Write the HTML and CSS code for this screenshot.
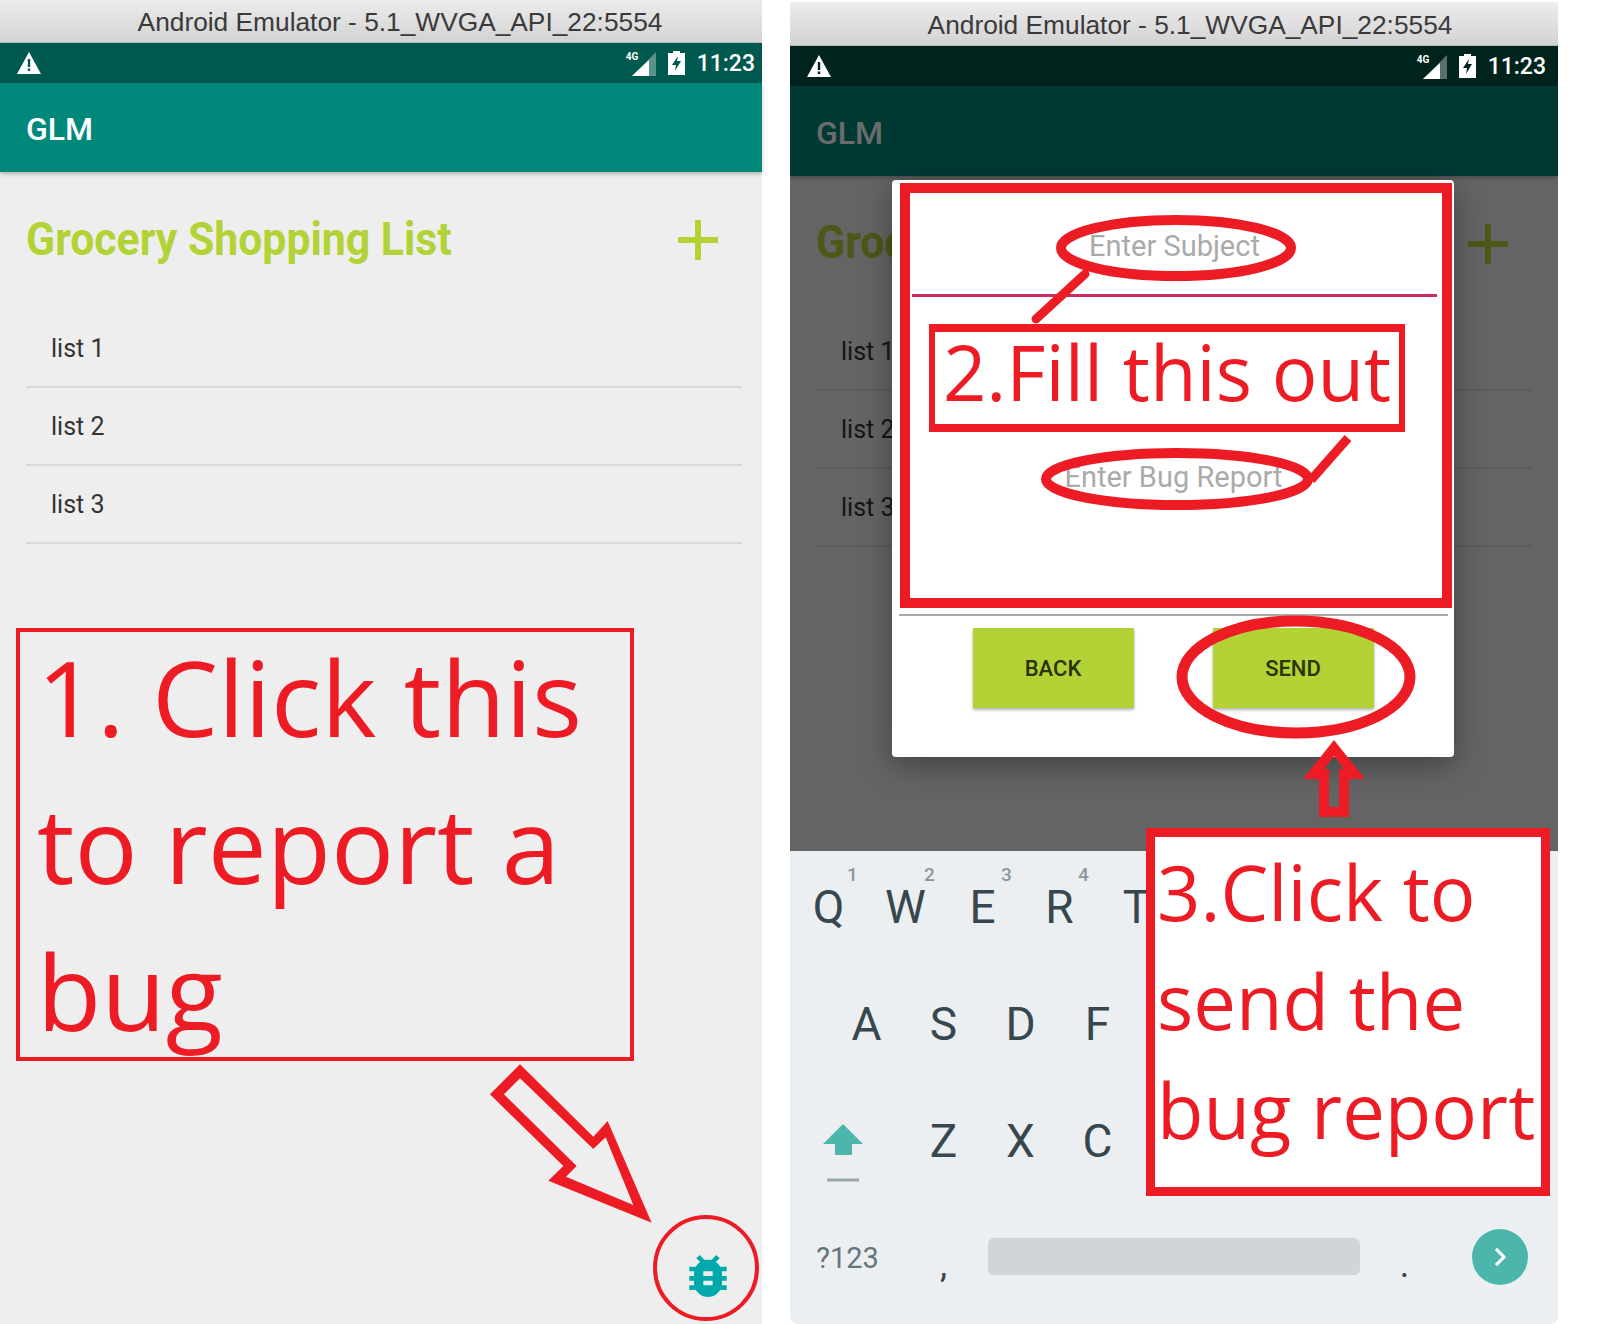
FILE: index.html
```html
<!DOCTYPE html>
<html lang="en">
<head>
    <meta charset="UTF-8">
    <title>Report a bug</title>
    <link rel="stylesheet" href="styles.css">
</head>
<body>
    <div class="shot">
        <!-- left emulator -->
        <div class="phone phone-left">
            <div class="titlebar">Android Emulator - 5.1_WVGA_API_22:5554</div>
            <div class="statusbar">
                <svg class="warn" viewBox="0 0 24 22"><path d="M12 0 24 22H0z" fill="#fff"/><path d="M10.8 7h2.4v8h-2.4zM10.8 16.500h2.400v2.500h-2.400z" fill="#00594f"/></svg>
                <span class="status-right">
                    <span class="net">4G</span>
                    <svg class="signal" viewBox="0 0 24 24"><path d="M24 0v24H0z" fill="#fff" opacity=".35"/><path d="M17 8v16H0z" fill="#fff"/></svg>
                    <svg class="battery" viewBox="0 0 17 24"><path d="M5 0h7v2h5v22H0V2h5z" fill="#fff"/><path d="M10 5 4 14h4l-1 6 6-10H9z" fill="#00594f"/></svg>
                    <span class="clock">11:23</span>
                </span>
            </div>
            <div class="screen">
                <div class="appbar">GLM</div>
                <div class="content">
                    <div class="heading">
                        <h1>Grocery Shopping List</h1>
                        <svg class="plus" viewBox="0 0 40 40"><path d="M17 0h6v17h17v6H23v17h-6V23H0v-6h17z"/></svg>
                    </div>
                    <div class="row">list 1</div>
                    <div class="row">list 2</div>
                    <div class="row">list 3</div>
                </div>
                <svg class="bug" viewBox="0 0 24 24"><path d="M20 8h-2.810c-.45-.78-1.070-1.450-1.820-1.960L17 4.410 15.590 3l-2.170 2.170C12.960 5.060 12.490 5 12 5c-.49 0-.96.06-1.410.17L8.410 3 7 4.410l1.620 1.630C7.880 6.550 7.260 7.220 6.810 8H4v2h2.090c-.05.33-.09.66-.09 1v1H4v2h2v1c0 .34.04.67.09 1H4v2h2.810c1.040 1.790 2.970 3 5.190 3s4.150-1.210 5.190-3H20v-2h-2.090c.05-.33.09-.66.09-1v-1h2v-2h-2v-1c0-.34-.04-.67-.09-1H20V8zm-6 8h-4v-2h4v2zm0-4h-4v-2h4v2z"/></svg>
            </div>
        </div>

        <!-- right emulator -->
        <div class="phone phone-right">
            <div class="titlebar">Android Emulator - 5.1_WVGA_API_22:5554</div>
            <div class="statusbar">
                <svg class="warn" viewBox="0 0 24 22"><path d="M12 0 24 22H0z" fill="#fff"/><path d="M10.8 7h2.4v8h-2.4zM10.8 16.500h2.400v2.500h-2.400z" fill="#01231e"/></svg>
                <span class="status-right">
                    <span class="net">4G</span>
                    <svg class="signal" viewBox="0 0 24 24"><path d="M24 0v24H0z" fill="#fff" opacity=".35"/><path d="M17 8v16H0z" fill="#fff"/></svg>
                    <svg class="battery" viewBox="0 0 17 24"><path d="M5 0h7v2h5v22H0V2h5z" fill="#fff"/><path d="M10 5 4 14h4l-1 6 6-10H9z" fill="#01231e"/></svg>
                    <span class="clock">11:23</span>
                </span>
            </div>
            <div class="screen">
                <div class="appbar">GLM</div>
                <div class="content">
                    <div class="heading">
                        <h1>Grocery Shopping List</h1>
                        <svg class="plus" viewBox="0 0 40 40"><path d="M17 0h6v17h17v6H23v17h-6V23H0v-6h17z"/></svg>
                    </div>
                    <div class="row">list 1</div>
                    <div class="row">list 2</div>
                    <div class="row">list 3</div>
                </div>
                <div class="dim"></div>
                <div class="dialog">
                    <div class="field field-subject">Enter Subject</div>
                    <div class="field field-report">Enter Bug Report</div>
                    <div class="dialog-buttons">
                        <div class="btn">BACK</div>
                        <div class="btn">SEND</div>
                    </div>
                </div>
            </div>
            <div class="keyboard">
                <div class="kb-row">
                    <div class="key">Q<sup>1</sup></div>
                    <div class="key">W<sup>2</sup></div>
                    <div class="key">E<sup>3</sup></div>
                    <div class="key">R<sup>4</sup></div>
                    <div class="key">T</div>
                </div>
                <div class="kb-row kb-row-home">
                    <div class="key">A</div>
                    <div class="key">S</div>
                    <div class="key">D</div>
                    <div class="key">F</div>
                </div>
                <div class="kb-row">
                    <div class="key key-wide">
                        <svg class="shift" viewBox="0 0 40 58"><path d="M20 0 40 20H29v11H12V20H0z" fill="#4db6ac"/><path d="M4 56h32" stroke="#9aa7ae" stroke-width="3"/></svg>
                    </div>
                    <div class="key">Z</div>
                    <div class="key">X</div>
                    <div class="key">C</div>
                </div>
                <div class="kb-row">
                    <div class="key key-wide key-small">?123</div>
                    <div class="key key-punct">,</div>
                    <div class="spacebar"></div>
                    <div class="key key-punct key-period">.</div>
                    <div class="go">
                        <svg viewBox="0 0 24 24"><path d="M8.500 5l7 7-7 7" fill="none" stroke="#fff" stroke-width="2.600"/></svg>
                    </div>
                </div>
            </div>
        </div>

        <!-- red notes drawn over the screenshots -->
        <div class="note note-one"><div class="note-text">1. Click this<br>to report a<br>bug</div></div>
        <div class="note note-frame"></div>
        <div class="note note-two">2.Fill this out</div>
        <div class="note note-three">3.Click to<br>send the<br>bug report</div>

        <svg class="marks" viewBox="0 0 1616 1324">
            <circle cx="706" cy="1268" r="51" stroke-width="4"/>
            <g transform="translate(460 1040) scale(.3333)">
                <path class="solid" fill-rule="evenodd" d="M180 73 400 290 443 243 575 548 265 422 310 378 90 163zM180 115 132 163 350 378 318 410 520 495 437 292 400 327z"/>
            </g>
            <ellipse cx="1176" cy="248" rx="115" ry="28" stroke-width="10"/>
            <path d="M1085 274 1036 319" stroke-width="9" stroke-linecap="round"/>
            <ellipse cx="1177" cy="479" rx="131" ry="26" stroke-width="10"/>
            <path d="M1348 438 1311 480" stroke-width="9"/>
            <ellipse cx="1296" cy="677" rx="114" ry="56" stroke-width="11"/>
            <path class="solid" fill-rule="evenodd" d="M1334 740 1365 779H1349V817H1319V779H1303zM1334 756 1324 769H1329V807H1339V769H1344z"/>
        </svg>
    </div>
</body>
</html>
```

FILE: styles.css
```css
body {
    margin: 0;
    background: white;
    font-family: Roboto, sans-serif;
}
.shot {
    position: relative;
    display: flex;
    align-items: flex-start;
    width: 1616px;
    height: 1324px;
    overflow: hidden;
}

/* phones */
.phone {
    display: flex;
    flex-direction: column;
    background: #eeeeee;
}
.phone-left {
    width: 762px;
    height: 1324px;
}
.phone-right {
    width: 768px;
    height: 1322px;
    margin: 2px 0 0 28px;
    border-radius: 0 0 8px 8px;
    overflow: hidden;
}
.titlebar {
    flex: none;
    height: 42px;
    line-height: 44px;
    padding-left: 38px;
    box-sizing: border-box;
    border-bottom: 1px solid #b9b9b9;
    background: linear-gradient(to bottom, #ececec, #d3d3d3);
    color: #3a3a3a;
    font-family: "Liberation Sans", sans-serif;
    font-size: 26.3px;
    text-align: center;
}
.phone-left .titlebar {
    height: 43px;
    border-radius: 6px 0 0 0;
}
.phone-right .titlebar {
    height: 44px;
    padding-left: 32px;
    line-height: 46px;
    border-radius: 10px 10px 0 0;
}
.statusbar {
    flex: none;
    display: flex;
    justify-content: space-between;
    align-items: center;
    height: 40px;
    padding: 0 7px 0 17px;
    background: #00594f;
}
.phone-right .statusbar {
    padding-right: 12px;
    background: #01231e;
}
.warn {
    width: 24px;
    height: 22px;
}
.status-right {
    display: flex;
    align-items: center;
    position: relative;
    color: white;
}
.net {
    position: absolute;
    left: -3px;
    top: 1px;
    font-size: 10px;
    font-weight: 700;
}
.signal {
    width: 24px;
    height: 24px;
    margin: 2px 12px 0 3px;
}
.battery {
    width: 17px;
    height: 24px;
    margin-right: 12px;
}
.clock {
    font-size: 23px;
    font-weight: 500;
}

/* app screen */
.screen {
    position: relative;
    flex: 1;
}
.appbar {
    height: 89px;
    line-height: 93px;
    padding-left: 26px;
    background: #00897b;
    box-shadow: 0 2px 4px rgba(0, 0, 0, 0.25);
    color: white;
    font-size: 32px;
    font-weight: 500;
}
.phone-right .appbar {
    height: 90px;
    line-height: 94px;
}
.content {
    padding: 0 20px 0 26px;
}
.phone-right .content {
    padding-right: 26px;
}
.heading {
    display: flex;
    justify-content: space-between;
    align-items: center;
    height: 138px;
    padding-right: 24px;
}
.phone-right .heading {
    height: 137px;
}
h1 {
    margin: -6px 0 0;
    color: #b2d235;
    font-size: 47px;
    font-weight: 700;
    white-space: nowrap;
    transform: scaleX(0.91);
    transform-origin: left center;
}
.plus {
    width: 40px;
    height: 40px;
    margin-top: -2px;
    fill: #b2d235;
}
.row {
    height: 76px;
    line-height: 78px;
    padding-left: 25px;
    border-bottom: 2px solid #d9d9d9;
    color: #333333;
    font-size: 25px;
}
.bug {
    position: absolute;
    left: 680px;
    bottom: 20px;
    width: 56px;
    height: 56px;
    fill: #00a9ac;
}

/* dialog on the right phone */
.dim {
    position: absolute;
    inset: 0;
    background: rgba(0, 0, 0, 0.58);
}
.dialog {
    position: absolute;
    left: 102px;
    top: 94px;
    width: 562px;
    height: 577px;
    background: white;
    border-radius: 4px;
    box-shadow: 0 8px 30px rgba(0, 0, 0, 0.35);
}
.field {
    color: #aaaaaa;
    font-size: 29px;
    text-align: center;
}
.field-subject {
    height: 117px;
    line-height: 132px;
    margin: 0 17px 0 20px;
    box-sizing: border-box;
    border-bottom: 3px solid #cc2a63;
}
.field-report {
    height: 319px;
    padding-top: 163px;
    box-sizing: border-box;
    line-height: 34px;
    border-bottom: 2px solid #a9a9a9;
    margin: 0 6px 0 7px;
}
.dialog-buttons {
    display: flex;
    justify-content: center;
    gap: 79px;
    margin-top: 12px;
}
.btn {
    width: 161px;
    height: 80px;
    line-height: 82px;
    background: #b2d235;
    box-shadow: 0 2px 3px rgba(0, 0, 0, 0.3);
    color: #2a3308;
    font-size: 22px;
    font-weight: 500;
    text-align: center;
}

/* keyboard */
.keyboard {
    position: relative;
    flex: none;
    height: 473px;
    background: #eceff1;
}
.kb-row {
    display: flex;
    height: 117px;
}
.kb-row:first-child {
    margin-top: -2px;
}
.kb-row-home {
    padding-left: 38px;
}
.key {
    position: relative;
    flex: none;
    width: 77px;
    line-height: 117px;
    color: #37474f;
    font-size: 46px;
    text-align: center;
}
.key sup {
    position: absolute;
    left: 57px;
    top: 10px;
    line-height: 32px;
    color: #8b979d;
    font-size: 19px;
    font-weight: 500;
}
.key-wide {
    width: 115px;
}
.shift {
    display: block;
    width: 40px;
    height: 58px;
    margin: 41px 0 0 33px;
}
.key-small {
    color: #66757c;
    font-size: 29px;
}
.key-punct {
    font-size: 36px;
    line-height: 130px;
}
.spacebar {
    width: 372px;
    height: 37px;
    margin: 38px 0 0 6px;
    border-radius: 6px;
    background: #d0d5d8;
}
.key-period {
    margin-left: 6px;
}
.go {
    width: 56px;
    height: 56px;
    margin: 29px 0 0 29px;
    border-radius: 50%;
    background: #4db6ac;
}
.go svg {
    display: block;
    width: 28px;
    height: 28px;
    margin: 14px;
}

/* red notes */
.note {
    position: absolute;
    box-sizing: border-box;
    border: solid #ed1c24;
    color: #ed1c24;
    font-family: "Open Sans", sans-serif;
    white-space: nowrap;
}
.note-one {
    left: 16px;
    top: 628px;
    width: 618px;
    height: 433px;
    padding: 0 17px;
    border-width: 4px;
    font-size: 105px;
    line-height: 147px;
}
.note-text {
    margin-top: -9px;
}
.note-frame {
    left: 900px;
    top: 183px;
    width: 552px;
    height: 425px;
    border-width: 10px;
}
.note-two {
    left: 929px;
    top: 324px;
    width: 476px;
    height: 108px;
    border-width: 8px;
    border-left-width: 6px;
    border-right-width: 6px;
    font-size: 76px;
    line-height: 80px;
    text-align: center;
}
.note-three {
    left: 1146px;
    top: 828px;
    width: 404px;
    height: 368px;
    padding-left: 2px;
    border-width: 9px;
    background: white;
    font-size: 76px;
    line-height: 109px;
}
.marks {
    position: absolute;
    left: 0;
    top: 0;
    width: 1616px;
    height: 1324px;
    fill: none;
    stroke: #ed1c24;
}
.marks .solid {
    fill: #ed1c24;
    stroke: none;
}
```
